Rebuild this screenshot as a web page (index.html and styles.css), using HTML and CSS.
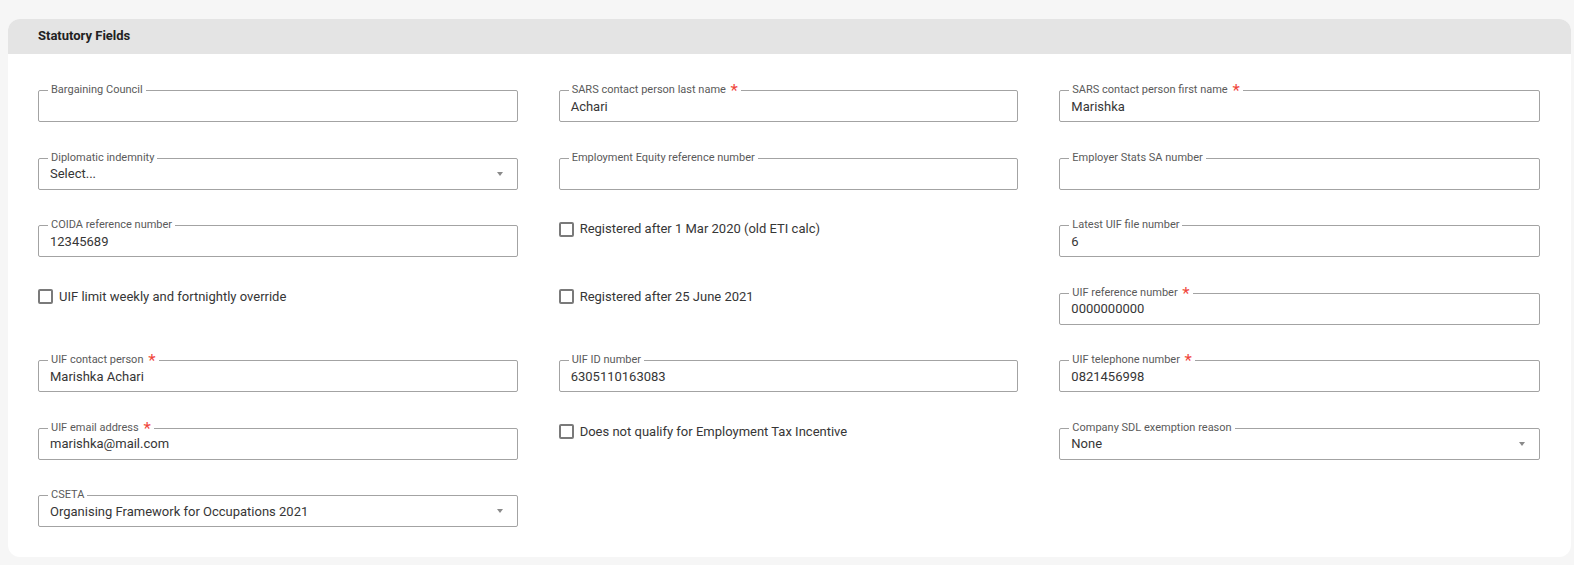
FILE: index.html
```html
<!DOCTYPE html>
<html lang="en">
<head>
<meta charset="utf-8">
<title>Statutory Fields</title>
<link rel="stylesheet" href="styles.css">
</head>
<body>
<section class="card">
  <header class="card-head">Statutory Fields</header>
  <div class="card-body">
    <div class="cell"><div class="field"><span class="label">Bargaining Council</span></div></div>
    <div class="cell"><div class="field"><span class="label">SARS contact person last name <span class="req">*</span></span><span class="value">Achari</span></div></div>
    <div class="cell"><div class="field"><span class="label">SARS contact person first name <span class="req">*</span></span><span class="value">Marishka</span></div></div>

    <div class="cell"><div class="field select"><span class="label">Diplomatic indemnity</span><span class="value">Select...</span><span class="caret"></span></div></div>
    <div class="cell"><div class="field"><span class="label">Employment Equity reference number</span></div></div>
    <div class="cell"><div class="field"><span class="label">Employer Stats SA number</span></div></div>

    <div class="cell"><div class="field"><span class="label">COIDA reference number</span><span class="value">12345689</span></div></div>
    <div class="cell"><label class="check"><span class="box"></span><span>Registered after 1 Mar 2020 (old ETI calc)</span></label></div>
    <div class="cell"><div class="field"><span class="label">Latest UIF file number</span><span class="value">6</span></div></div>

    <div class="cell"><label class="check"><span class="box"></span><span>UIF limit weekly and fortnightly override</span></label></div>
    <div class="cell"><label class="check"><span class="box"></span><span>Registered after 25 June 2021</span></label></div>
    <div class="cell"><div class="field"><span class="label">UIF reference number <span class="req">*</span></span><span class="value">0000000000</span></div></div>

    <div class="cell"><div class="field"><span class="label">UIF contact person <span class="req">*</span></span><span class="value">Marishka Achari</span></div></div>
    <div class="cell"><div class="field"><span class="label">UIF ID number</span><span class="value">6305110163083</span></div></div>
    <div class="cell"><div class="field"><span class="label">UIF telephone number <span class="req">*</span></span><span class="value">0821456998</span></div></div>

    <div class="cell"><div class="field"><span class="label">UIF email address <span class="req">*</span></span><span class="value">marishka@mail.com</span></div></div>
    <div class="cell"><label class="check"><span class="box"></span><span>Does not qualify for Employment Tax Incentive</span></label></div>
    <div class="cell"><div class="field select"><span class="label">Company SDL exemption reason</span><span class="value">None</span><span class="caret"></span></div></div>

    <div class="cell"><div class="field select"><span class="label">CSETA</span><span class="value">Organising Framework for Occupations 2021</span><span class="caret"></span></div></div>
  </div>
</section>
</body>
</html>
```

FILE: styles.css
```css
html, body {
  margin: 0;
  background: #f6f6f6;
}
body {
  padding: 19px 3px 8px 8px;
  font-family: Roboto, "Liberation Sans", Arial, sans-serif;
  color: #333;
}
.card {
  background: #fff;
  border-radius: 12px;
  overflow: hidden;
}
.card-head {
  height: 35px;
  background: #e4e4e4;
  padding: 0 30px;
  font-size: 13px;
  font-weight: 700;
  line-height: 33px;
  color: #222;
}
.card-body {
  display: grid;
  grid-template-columns: 480fr 460fr 481fr;
  column-gap: 41px;
  row-gap: 29.5px;
  padding: 30px 31px 30px 30px;
}
.cell {
  height: 38px;
  padding-top: 6px;
  box-sizing: border-box;
}
.field {
  position: relative;
  height: 32px;
  box-sizing: border-box;
  border: 1px solid #a3a3a3;
  border-radius: 2px;
  display: flex;
  align-items: center;
  padding: 1px 11px 0 11px;
  font-size: 13px;
  color: #363636;
}
.label {
  position: absolute;
  top: -7px;
  left: 9px;
  padding: 0 3px;
  background: #fff;
  font-size: 11px;
  line-height: 12px;
  color: #5a5a5a;
  white-space: nowrap;
}
.req {
  display: inline-block;
  margin-left: 2px;
  color: #f0473c;
  font-size: 17px;
  font-weight: 400;
  line-height: 10px;
  vertical-align: -3px;
}
.value {
  line-height: 16px;
  white-space: nowrap;
}
.caret {
  position: absolute;
  right: 14px;
  top: 13px;
  width: 0;
  height: 0;
  border-left: 3.5px solid transparent;
  border-right: 3.5px solid transparent;
  border-top: 4px solid #8a8a8a;
}
.check {
  display: flex;
  align-items: center;
  gap: 6px;
  margin-top: -4px;
  font-size: 13px;
  color: #363636;
  line-height: 16px;
}
.box {
  width: 15px;
  height: 15px;
  box-sizing: border-box;
  border: 2px solid #7a7a7a;
  border-radius: 2px;
  flex: none;
}
```
